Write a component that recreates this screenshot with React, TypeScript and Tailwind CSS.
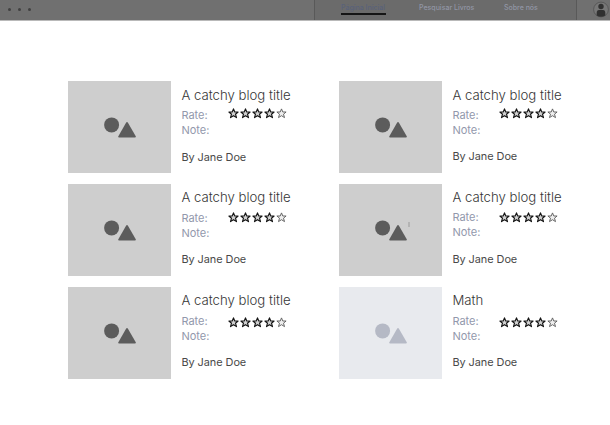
type Book = {
  title: string;
  muted?: boolean;
  padClass: string;
  rateClass: string;
  starsClass: string;
  authorClass: string;
  mark?: boolean;
};

const books: Book[] = [
  { title: "A catchy blog title", padClass: "pt-[6px]", rateClass: "mt-[4px]", starsClass: "mt-0", authorClass: "mt-[12px]" },
  { title: "A catchy blog title", padClass: "pt-[6px]", rateClass: "mt-[4px]", starsClass: "mt-0", authorClass: "mt-[11px]" },
  { title: "A catchy blog title", padClass: "pt-[5px]", rateClass: "mt-[5px]", starsClass: "mt-[1px]", authorClass: "mt-[11px]" },
  { title: "A catchy blog title", padClass: "pt-[5px]", rateClass: "mt-[4px]", starsClass: "mt-[2px]", authorClass: "mt-[12px]", mark: true },
  { title: "A catchy blog title", padClass: "pt-[5px]", rateClass: "mt-[5px]", starsClass: "mt-[3px]", authorClass: "mt-[11px]" },
  { title: "Math", muted: true, padClass: "pt-[5px]", rateClass: "mt-[5px]", starsClass: "mt-[3px]", authorClass: "mt-[11px]" },
];

function Thumbnail({ muted, mark }: { muted?: boolean; mark?: boolean }) {
  return (
    <div className={`relative h-[92px] w-[103px] shrink-0 ${muted ? "bg-[#e8eaee]" : "bg-[#cecece]"}`}>
      <svg
        width="103"
        height="92"
        viewBox="0 0 103 92"
        className={`block ${muted ? "fill-[#b5b9c5]" : "fill-[#5c5c5c]"}`}
      >
        <circle cx="43.6" cy="43.9" r="7.5" />
        <path d="M58.2 41.4Q59 40.6 59.8 41.4L67.9 55.5Q68 56.3 67.2 56.4H50.8Q50 56.3 50.2 55.5Z" />
      </svg>
      {mark && <span className="absolute left-[69px] top-[38px] h-[5px] w-[2px] bg-[#b4b4b4]" />}
    </div>
  );
}

function Star({ filled }: { filled: boolean }) {
  return (
    <svg width="12" height="11" viewBox="0 0 12 11" className="block">
      <path
        d="M5.5 0.9L6.8 4H10.1L7.5 6.2L8.5 9.6L5.5 7.7L2.5 9.6L3.5 6.2L0.9 4H4.2Z"
        fill={filled ? "#d0d0d0" : "#eeeeee"}
        stroke={filled ? "#161616" : "#606060"}
        strokeWidth={filled ? 1.15 : 0.95}
        strokeLinejoin="round"
      />
    </svg>
  );
}

function BookCard({ book }: { book: Book }) {
  return (
    <article className="flex h-[92px]">
      <Thumbnail muted={book.muted} mark={book.mark} />
      <div className={`ml-[10px] flex flex-col whitespace-nowrap text-[#484848] ${book.padClass}`}>
        <h2 className="h-[17px] text-[13.2px] font-[350] leading-[17px] text-[#363636]">{book.title}</h2>
        <div className={`flex h-[15px] ${book.rateClass}`}>
          <span className="w-[47px] text-[11px] leading-[15px] text-[#9298ac]">Rate:</span>
          <div className={`flex ${book.starsClass}`}>
            {[0, 1, 2, 3, 4].map((n) => (
              <Star key={n} filled={n < 4} />
            ))}
          </div>
        </div>
        <span className="h-[15px] text-[11px] leading-[15px] text-[#9298ac]">Note:</span>
        <span className={`text-[10.9px] leading-[15px] tracking-[-0.04px] ${book.authorClass}`}>By Jane Doe</span>
      </div>
    </article>
  );
}

export default function App() {
  return (
    <div className="h-[425px] w-[610px] overflow-hidden bg-white font-['Inter','Liberation_Sans',sans-serif]">
      <header className="flex h-[21px] border-b border-[#b9b9b9] bg-[#707070]">
        <div className="flex w-[314px] items-start gap-[7px] pl-[7.5px] pt-[8px]">
          <i className="size-[3px] rounded-full bg-[#404040]" />
          <i className="size-[3px] rounded-full bg-[#404040]" />
          <i className="size-[3px] rounded-full bg-[#404040]" />
        </div>
        <nav className="flex h-[20px] w-[263px] border-x border-[#595959] bg-[#6b6b6b] pl-[26px] pt-[3px] text-[7px] font-medium leading-[10px] text-[#9296a5]">
          <a className="flex h-[13px] w-[78px] flex-col whitespace-nowrap text-[#59627a]">
            <span className="h-[10px]">Página Inicial</span>
            <span className="h-[2px] w-[45px] bg-[#151515]" />
          </a>
          <a className="w-[85px] whitespace-nowrap">Pesquisar Livros</a>
          <a className="whitespace-nowrap">Sobre nós</a>
        </nav>
        <svg width="33" height="20" viewBox="0 0 33 20">
          <circle cx="24" cy="9.5" r="7.4" fill="#777777" stroke="#505050" strokeWidth="0.8" />
          <circle cx="24" cy="6.5" r="2.7" fill="#303030" />
          <path d="M19.7 15.4V13Q19.7 10.1 22 10.1H26Q28.3 10.1 28.3 13V15.4Q24 18 19.7 15.4Z" fill="#303030" />
        </svg>
      </header>
      <main className="grid grid-cols-[271px_271px] gap-y-[11px] pl-[68.4px] pt-[60.4px]">
        {books.map((book, index) => (
          <BookCard key={index} book={book} />
        ))}
      </main>
    </div>
  );
}
